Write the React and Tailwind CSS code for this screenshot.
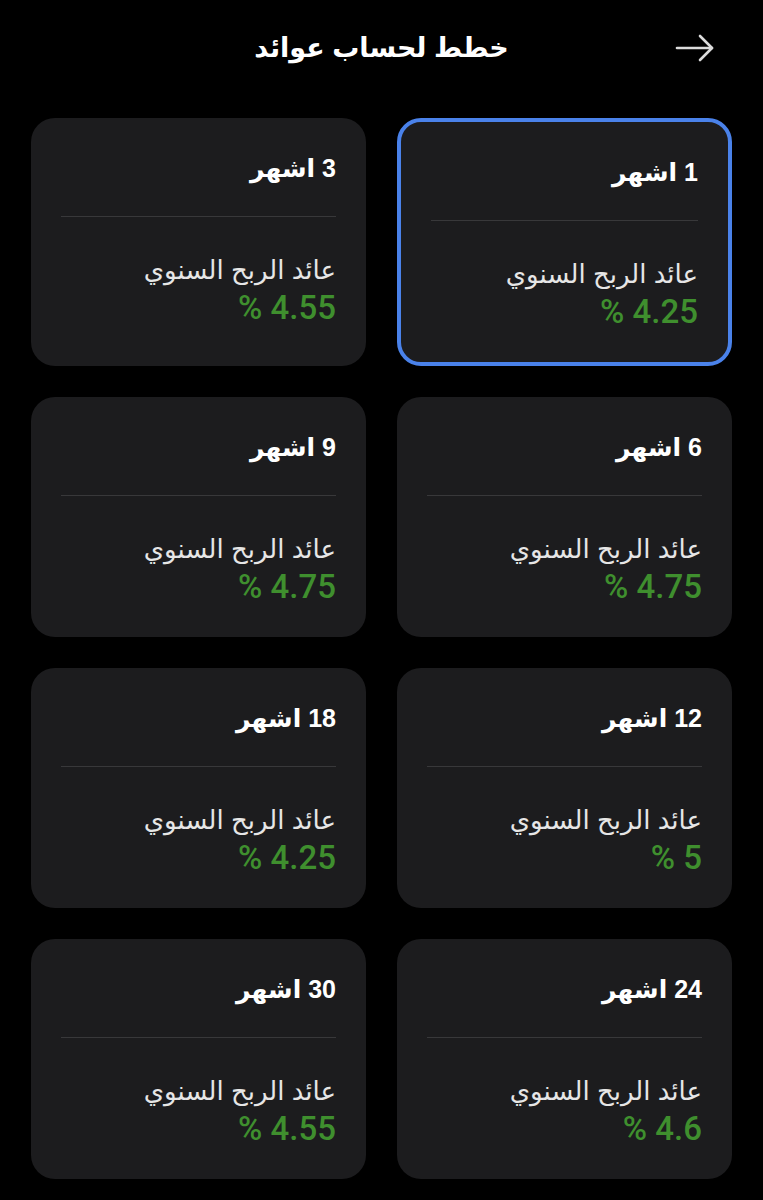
import React from 'react';

const plans = [
    { months: 1, rate: '4.25', selected: true },
    { months: 3, rate: '4.55' },
    { months: 6, rate: '4.75' },
    { months: 9, rate: '4.75' },
    { months: 12, rate: '5' },
    { months: 18, rate: '4.25' },
    { months: 24, rate: '4.6' },
    { months: 30, rate: '4.55' },
];

const font = { fontFamily: '"Liberation Sans", "DejaVu Sans", sans-serif' };

const PlanCard = ({ months, rate, selected }) => (
    <div
        dir="rtl"
        className={`bg-[#1c1c1e] rounded-[24px] px-[30px] pt-[34px] pb-[32px] ${selected ? 'border-4 border-[#4a82ea]' : ''}`}
    >
        <div className="text-white text-[25px] font-bold leading-[32px]">{months} اشهر</div>
        <div className="h-px bg-[#38383a] mt-[32px]"></div>
        <div className="text-[#e6e6e6] text-[26px] leading-[32px] mt-[37px]">عائد الربح السنوي</div>
        <div dir="ltr" className="text-right text-[#3f8f2e] text-[33px] font-medium leading-[36px] mt-[4px] font-[Roboto,sans-serif]">% {rate}</div>
    </div>
);

const App = () => {
    return (
        <div className="min-h-[1200px] bg-black" style={font}>
            <header className="relative h-[96px] flex items-center justify-center">
                <h1 dir="rtl" className="text-white text-[27px] font-bold">خطط لحساب عوائد</h1>
                <svg className="absolute right-[48px] top-[33px]" width="40" height="30" viewBox="0 0 40 30" fill="none" stroke="#dcdcdc" strokeWidth="2.6" strokeLinecap="round" strokeLinejoin="round">
                    <path d="M2 15 H37" />
                    <path d="M25 3 L37 15 L25 27" />
                </svg>
            </header>
            <main dir="rtl" className="grid grid-cols-2 gap-x-[31px] gap-y-[31px] px-[31px] pt-[22px] pb-[20px]">
                {plans.map((p) => (
                    <PlanCard key={p.months} {...p} />
                ))}
            </main>
        </div>
    );
};

export default App;
